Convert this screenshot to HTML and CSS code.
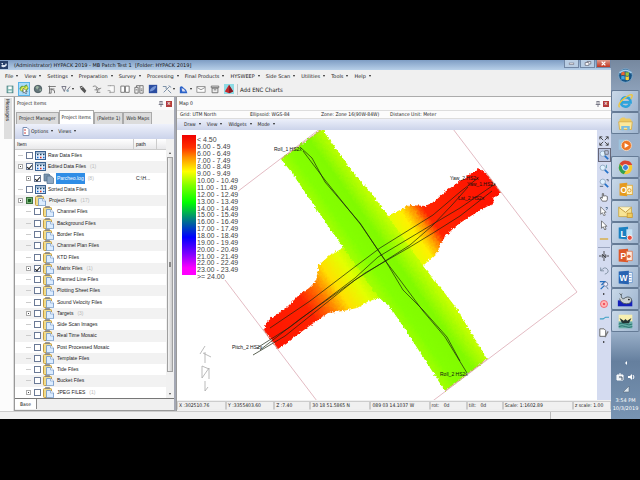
FILE: index.html
```
<!DOCTYPE html>
<html lang="en">
<head>
<meta charset="utf-8">
<title>HYPACK 2019 - MB Patch Test 1</title>
<link rel="stylesheet" href="styles.css">
</head>
<body>
<svg class="defs" aria-hidden="true">
  <defs>
    <linearGradient id="gArm" gradientUnits="userSpaceOnUse" x1="270" y1="340" x2="496" y2="186">
      <stop offset="0" stop-color="#ff1400"/><stop offset=".18" stop-color="#ff2200"/><stop offset=".25" stop-color="#ff7a00"/><stop offset=".31" stop-color="#ffe000"/><stop offset=".38" stop-color="#e4ff00"/><stop offset=".45" stop-color="#a0ff00"/><stop offset=".53" stop-color="#a0ff00"/><stop offset=".6" stop-color="#e0ff00"/><stop offset=".66" stop-color="#fff000"/><stop offset=".7" stop-color="#ff9800"/><stop offset=".735" stop-color="#ff2400"/><stop offset="1" stop-color="#ff1000"/>
    </linearGradient>
    <linearGradient id="gSwath" gradientUnits="userSpaceOnUse" x1="356" y1="277" x2="408" y2="240">
      <stop offset="0" stop-color="#b4ff00"/><stop offset=".3" stop-color="#84ff00"/><stop offset=".65" stop-color="#80fa00"/><stop offset="1" stop-color="#d0ff00"/>
    </linearGradient>
    <filter id="rough" x="-5%" y="-5%" width="110%" height="110%" color-interpolation-filters="sRGB">
      <feTurbulence type="fractalNoise" baseFrequency=".4" numOctaves="2" seed="4" result="n"/>
      <feDisplacementMap in="SourceGraphic" in2="n" scale="4" xChannelSelector="R" yChannelSelector="G"/>
    </filter>
    <symbol id="table" viewBox="0 0 11 9"><rect x=".5" y=".5" width="10" height="8" fill="#e6efff" stroke="#3b6290"/><path d="M1 2h9" stroke="#68a"/><path d="M2 3.5h1.5M5 3.5h1.5M8 3.5h1.5" stroke="#146" stroke-width="1.4"/><path d="M2 6.5h1.5M8 6.5h1.5" stroke="#126bd0" stroke-width="1.5"/><path d="M5 6.5h1.5" stroke="#c32" stroke-width="1.5"/></symbol>
    <symbol id="clip" viewBox="0 0 11 11"><rect x=".5" y="1.5" width="8" height="9" rx="1" fill="#f2dc8c" stroke="#c79d3c"/><path d="M2.5 1.5h4V.5h-4z" fill="#ccc" stroke="#777" stroke-width=".7"/><path d="M3.5 3.5h4l3 2.5v4.7h-7z" fill="#dcecff" stroke="#6b93c6" stroke-width=".8"/><path d="M7.5 3.5V6h3" fill="#fff" stroke="#6b93c6" stroke-width=".6"/></symbol>
    <symbol id="docs" viewBox="0 0 11 11"><path d="M1 1h5l1 1v6H1z" fill="#7892ad" stroke="#4f6d8b" stroke-width=".7"/><path d="M4 3h4l2.500 2v5.500H4z" fill="#90a9c3" stroke="#4f6d8b" stroke-width=".7"/></symbol>
    <symbol id="pin" viewBox="0 0 6 6"><path d="M1.500 .5h3M2 .5v3M4 .5v3M.7 3.500h4.600M3 3.500v2.500" fill="none" stroke="#556" stroke-width=".7"/></symbol>
    <symbol id="mag" viewBox="0 0 12 12"><circle cx="4.500" cy="4.500" r="3.200" fill="#dff1ff" stroke="#8ba3bd"/><path d="M7 7l4 4" stroke="#2672c8" stroke-width="2.200"/></symbol>
  </defs>
</svg>
<div class="screen">
<main class="app">
  <header class="titlebar">
    <svg class="appicon" viewBox="0 0 8 8"><rect width="8" height="8" fill="#26406a"/><path d="M1 5q3 3 6-1l-1-2-1 2-3 0zM1 2h2v2" fill="#dce6f2"/></svg>
    <h1>(Administrator) HYPACK 2019 - MB Patch Test 1 &nbsp;[Folder: HYPACK 2019]</h1>
    <div class="winbtns">
      <button aria-label="Minimize"><svg viewBox="0 0 14 6"><rect x="4.500" y="2.500" width="5" height="1.500" fill="#fff" stroke="#667"  stroke-width=".6"/></svg></button>
      <button aria-label="Restore"><svg viewBox="0 0 14 6"><path d="M6.500 2V.8h4v2.700H9M4.500 2h4v3h-4z" fill="#fff" stroke="#556" stroke-width=".7"/></svg></button>
      <button class="close" aria-label="Close"><svg viewBox="0 0 14 6"><path d="M5 1l4 4M9 1L5 5" stroke="#fff" stroke-width="1.400"/></svg></button>
    </div>
  </header>
  <nav class="menubar">
    <button class="drop">File</button><button class="drop">View</button><button class="drop">Settings</button><button class="drop">Preparation</button><button class="drop">Survey</button><button class="drop">Processing</button><button class="drop">Final Products</button><button class="drop">HYSWEEP</button><button class="drop">Side Scan</button><button class="drop">Utilities</button><button class="drop">Tools</button><button class="drop">Help</button>
  </nav>
  <div class="toolbar">
    <button aria-label="Save"><svg viewBox="0 0 12 12"><rect x="2.500" y="2.500" width="7" height="8" fill="#8fc4bc" stroke="#467f80"/><rect x="4" y="3" width="4" height="3" fill="#fff"/><rect x="4" y="8" width="4" height="2" fill="#e8f4f4"/></svg></button>
    <button class="on" aria-label="Map refresh"><svg viewBox="0 0 12 12"><path d="M1 5q2-4 5-2l3-2 2 4-2 3-4 1-3-1z" fill="#9acb3c" stroke="#3a7a38" stroke-width=".7"/><path d="M2 8l3-4 2 3 3-4" stroke="#f5ee60" stroke-width="1.500" fill="none"/><path d="M5 5v6l1.500-1.500L8 12l1-.6L7.800 9H10z" fill="#fff" stroke="#234" stroke-width=".6"/></svg></button>
    <button aria-label="Globe"><svg viewBox="0 0 12 12"><circle cx="6" cy="6" r="4.500" fill="#63757a" stroke="#46565c"/><path d="M3 4q3-3 4 0l-2 3zM7 7l3-1-1 3z" fill="#9cb5a2"/></svg></button>
    <button aria-label="Level"><svg viewBox="0 0 12 12"><path d="M3 2v9M1.500 3h9M3 6h6M5 11V6l4 2v3M2 11h3" fill="none" stroke="#666"/></svg></button>
    <button class="wide drop" aria-label="Shapes"><svg viewBox="0 0 12 12"><path d="M1 3h5l-2 6zM7 8l4-5" fill="none" stroke="#667"/><circle cx="8" cy="8" r="1.500" fill="#8ab"/></svg></button>
    <button aria-label="Pen"><svg viewBox="0 0 12 12"><path d="M2 3l3-1 5 6-2 3-5-5z" fill="#555"/><path d="M3 5l3-2" stroke="#ddd"/></svg></button>
    <button aria-label="Lines"><svg viewBox="0 0 12 12"><path d="M1 3q3-2 5 1t5 1M3 7h6M5 10h5M5 4l2 6" fill="none" stroke="#777"/></svg></button>
    <button aria-label="Sheet"><svg viewBox="0 0 12 12"><path d="M2 2h4M5 2l5 0v8H4M2 8h3v3" fill="#fafafa" stroke="#999"/></svg></button>
    <button aria-label="Book"><svg viewBox="0 0 12 12"><path d="M1 2.500h4.500V10H1zM6.500 2.500H11V10H6.500z" fill="#fff" stroke="#666"/></svg></button>
    <button aria-label="Table"><svg viewBox="0 0 12 12"><path d="M1 4h4v7H1zM7 2h4v9H7zM3 4V2h4M2 7h2M8 6h2M8 8h2" fill="none" stroke="#666"/></svg></button>
    <button aria-label="Matrix"><svg viewBox="0 0 12 12"><rect x="1" y="1" width="10" height="10" fill="#2b4da0"/><path d="M2 9q1-6 8-7-1 6-8 7z" fill="#7595d6"/></svg></button>
    <button class="wide drop" aria-label="Tools"><svg viewBox="0 0 12 12"><path d="M2 10l7-7M1 3h4v3M8 2l3 2M7 7l4 4" fill="none" stroke="#68809a"/></svg></button>
    <button class="wide drop" aria-label="Whale"><svg viewBox="0 0 12 12"><path d="M1 4q2-3 5 1 3 1 4 6H1z" fill="#2a62c8"/><path d="M3 5q3 0 5 4H4z" fill="#dde"/></svg></button>
    <button aria-label="Mail"><svg viewBox="0 0 12 12"><path d="M1 3h10v7H1zM1 4l5 3 5-3" fill="#fff" stroke="#888"/></svg></button>
    <button aria-label="Archive"><svg viewBox="0 0 12 12"><path d="M1.500 2.500h9v2h-9zM2.500 5h7v5.500h-7zM4.500 7h3" fill="#eee" stroke="#666"/></svg></button>
    <button aria-label="Chart"><svg viewBox="0 0 12 12"><rect width="12" height="12" fill="#8edbe4"/><path d="M6 1l5 8-5 2-5-2z" fill="#c5262b"/><path d="M6 1v10l5-2z" fill="#861b25"/></svg></button>
    <span class="sep"></span>
    <button class="text">Add ENC Charts</button>
  </div>
  <div class="work">
    <aside class="rail"><button>Messages</button></aside>
    <section class="items">
      <div class="panelhead"><h2>Project Items</h2><svg class="i6"><use href="#pin"/></svg><button class="x" aria-label="Close panel">×</button></div>
      <div class="tabs"><button>Project Manager</button><button class="sel">Project Items</button><button>(Palette 1)</button><button>Web Maps</button></div>
      <div class="optbar"><svg class="opticon" viewBox="0 0 8 9"><path d="M1 .5h4l2 2v6H1z" fill="#fff" stroke="#7a8fb4"/><path d="M2 3h2M2 6h2" stroke="#c44"/></svg><button class="drop">Options</button><button class="drop">Views</button></div>
      <div class="treewrap">
        <table class="tree">
          <thead><tr><th>Item</th><th>path</th></tr></thead>
          <tbody>
            <tr><td><i></i><label><input type="checkbox"><svg class="tb"><use href="#table"/></svg>Raw Data Files</label></td><td></td></tr>
            <tr class="alt"><td><i class="exp minus"></i><label><input type="checkbox" checked><svg class="tb"><use href="#table"/></svg>Edited Data Files</label><small>(1)</small></td><td></td></tr>
            <tr class="sub"><td><i class="exp"></i><label><input type="checkbox" checked><svg class="cl"><use href="#docs"/></svg><b>Parcheo.log</b></label><small>(8)</small></td><td>C:\H...</td></tr>
            <tr><td><i></i><label><input type="checkbox"><svg class="tb"><use href="#table"/></svg>Sorted Data Files</label></td><td></td></tr>
            <tr class="alt"><td><i class="exp minus"></i><label><input type="checkbox" class="part"><svg class="cl"><use href="#clip"/></svg>Project Files</label><small>(17)</small></td><td></td></tr>
            <tr class="sub"><td><i></i><label><input type="checkbox"><svg class="cl"><use href="#clip"/></svg>Channel Files</label></td><td></td></tr>
            <tr class="sub alt"><td><i></i><label><input type="checkbox"><svg class="cl"><use href="#clip"/></svg>Background Files</label></td><td></td></tr>
            <tr class="sub"><td><i></i><label><input type="checkbox"><svg class="cl"><use href="#clip"/></svg>Border Files</label></td><td></td></tr>
            <tr class="sub alt"><td><i></i><label><input type="checkbox"><svg class="cl"><use href="#clip"/></svg>Channel Plan Files</label></td><td></td></tr>
            <tr class="sub"><td><i></i><label><input type="checkbox"><svg class="cl"><use href="#clip"/></svg>KTD Files</label></td><td></td></tr>
            <tr class="sub alt"><td><i class="exp"></i><label><input type="checkbox" checked><svg class="cl"><use href="#clip"/></svg>Matrix Files</label><small>(1)</small></td><td></td></tr>
            <tr class="sub"><td><i></i><label><input type="checkbox"><svg class="cl"><use href="#clip"/></svg>Planned Line Files</label></td><td></td></tr>
            <tr class="sub alt"><td><i></i><label><input type="checkbox"><svg class="cl"><use href="#clip"/></svg>Plotting Sheet Files</label></td><td></td></tr>
            <tr class="sub"><td><i></i><label><input type="checkbox"><svg class="cl"><use href="#clip"/></svg>Sound Velocity Files</label></td><td></td></tr>
            <tr class="sub alt"><td><i class="exp"></i><label><input type="checkbox"><svg class="cl"><use href="#clip"/></svg>Targets</label><small>(3)</small></td><td></td></tr>
            <tr class="sub"><td><i></i><label><input type="checkbox"><svg class="cl"><use href="#clip"/></svg>Side Scan Images</label></td><td></td></tr>
            <tr class="sub alt"><td><i></i><label><input type="checkbox"><svg class="cl"><use href="#clip"/></svg>Real Time Mosaic</label></td><td></td></tr>
            <tr class="sub"><td><i></i><label><input type="checkbox"><svg class="cl"><use href="#clip"/></svg>Post Processed Mosaic</label></td><td></td></tr>
            <tr class="sub alt"><td><i></i><label><input type="checkbox"><svg class="cl"><use href="#clip"/></svg>Template Files</label></td><td></td></tr>
            <tr class="sub"><td><i></i><label><input type="checkbox"><svg class="cl"><use href="#clip"/></svg>Tide Files</label></td><td></td></tr>
            <tr class="sub alt"><td><i></i><label><input type="checkbox"><svg class="cl"><use href="#clip"/></svg>Bucket Files</label></td><td></td></tr>
            <tr class="sub"><td><i class="exp"></i><label><input type="checkbox"><svg class="cl"><use href="#clip"/></svg>JPEG FILES</label><small>(1)</small></td><td></td></tr>
          </tbody>
        </table>
        <div class="scroll"><span class="up"></span><span class="thumb"></span><span class="down"></span></div>
      </div>
      <div class="base"><button>Base</button></div>
    </section>
    <section class="map">
      <div class="panelhead"><h2>Map 0</h2><svg class="i6"><use href="#pin"/></svg><button class="x" aria-label="Close map">×</button></div>
      <div class="geo"><span>Grid: UTM North</span><span>Ellipsoid: WGS-84</span><span>Zone: Zone 16(90W-84W)</span><span>Distance Unit: Meter</span></div>
      <div class="mapmenu"><button class="drop">Draw</button><button class="drop">View</button><button class="drop">Widgets</button><button class="drop">Mode</button></div>
      <div class="mapbody">
        <div class="canvas">
          <svg class="chart" viewBox="177 130 420 270" preserveAspectRatio="xMinYMin meet">
            <path d="M325 125L187 230L317 401M430 403L577 292L450 125" fill="none" stroke="#dcaab4" stroke-width=".8"/>
            <g filter="url(#rough)">
              <path fill="url(#gArm)" d="M264 330L267 322 275 315 285 309 298 296 309 288 316 281 319 265 330 255 343 248 360 235 387 216 400 210 410 205 425 206 434 202 446 191 460 181 479 168 486 174 490 178 501 193 493 198 494 204 488 206 474 214 460 223 447 234 443 240 437 253 425 264 400 285 378 298 370 301 357 308 343 311 328 313 308 327 278 349z"/>
              <path fill="url(#gSwath)" d="M281 159L322 129 337 150 355 175 372 194 388 216 423 266 440 287 457 309 473 336 487 359 445 391 423 357 407 332 390 307 378 297 343 247 333 233 317 210 307 195 292 173z"/>
            </g>
            <path d="M281 159L321 130M263 329L278 349M445 391L487 359M486 173L501 193" stroke="#d9907a" stroke-width=".7"/>
            <g fill="none" stroke="#1a2410" stroke-width=".7">
              <path d="M300 147L312 158 325 182 360 223 378 250 385 260 403 290 423 310 447 337 460 361"/>
              <path d="M303 151L325 180 361 225 384 259 400 280 423 311 445 337 467 373"/>
              <path d="M270 328L310 301 352 269 380 248 433 215 460 192 478 178"/>
              <path d="M253 355L285 336 355 280 385 261 410 245 432 226 452 205 468 187"/>
              <path d="M257 348L290 327 355 278 378 257 433 224 460 208 495 184"/>
              <path d="M260 350L300 319 365 273 410 247 433 233 460 216 492 191"/>
            </g>
            <g class="tags">
              <text x="274" y="151">Roll_1 HS2x</text><text x="450" y="180">Yaw_2.HS2x</text><text x="467" y="186">Yaw_1.HS2x</text><text x="458" y="200">Lat_2.HS2x</text><text x="232" y="349">Pitch_2 HS2x</text><text x="440" y="376">Roll_2 HS2x</text>
            </g>
            <path d="M200 354L205 346M203 353L211 357M205 352V363M202 366V378L209 368V379M202 366L209 369M205 381V391L208 387" fill="none" stroke="#aaa" stroke-width=".8"/>
          </svg>
          <div class="legend">
            <div class="ramp"></div>
            <ul><li>&lt; 4.50</li><li>5.00 - 5.49</li><li>6.00 - 6.49</li><li>7.00 - 7.49</li><li>8.00 - 8.49</li><li>9.00 - 9.49</li><li>10.00 - 10.49</li><li>11.00 - 11.49</li><li>12.00 - 12.49</li><li>13.00 - 13.49</li><li>14.00 - 14.49</li><li>15.00 - 15.49</li><li>16.00 - 16.49</li><li>17.00 - 17.49</li><li>18.00 - 18.49</li><li>19.00 - 19.49</li><li>20.00 - 20.49</li><li>21.00 - 21.49</li><li>22.00 - 22.49</li><li>23.00 - 23.49</li><li>&gt;= 24.00</li></ul>
          </div>
        </div>
        <div class="maptools">
          <button aria-label="Zoom extents"><svg viewBox="0 0 12 12"><path d="M1 4V1h3M8 1h3v3M11 8v3H8M4 11H1V8M1 1l4 4M11 1L7 5M11 11L7 7M1 11l4-4" fill="none" stroke="#333"/></svg></button>
          <button class="on" aria-label="Zoom window"><svg viewBox="0 0 12 12"><use href="#mag"/><rect x="7" y="1" width="4" height="4" fill="none" stroke="#444" stroke-width=".7"/></svg></button>
          <button aria-label="Zoom in"><svg viewBox="0 0 12 12"><use href="#mag"/><path d="M9 1v4" stroke="#59a"/></svg></button>
          <button aria-label="Zoom out"><svg viewBox="0 0 12 12"><use href="#mag"/><path d="M1 10h4M9 2h2v2" stroke="#456" fill="none"/></svg></button>
          <button aria-label="Pan"><svg viewBox="0 0 12 12"><path d="M4 11L1.500 7l1-.7L4 7.500V2q.8-1 1.500 0v3q.8-1 1.500 0 .8-1 1.500 0 1-.5 1.500.5V9l-1 2z" fill="#fff" stroke="#333" stroke-width=".8"/></svg></button>
          <button aria-label="Query"><svg viewBox="0 0 12 12"><path d="M2 1v9l2-2 2 4 1.500-1L6 7.500h2.500z" fill="#fff" stroke="#555" stroke-width=".8"/><path d="M8 2q3-1 2 1L9 4.500" fill="none" stroke="#357"/></svg></button>
          <button aria-label="Select"><svg viewBox="0 0 12 12"><path d="M3 1v9l2-2 2 4 1.500-1L7 7.500h2.500z" fill="#fff" stroke="#444" stroke-width=".8"/></svg></button>
          <button aria-label="Measure"><svg viewBox="0 0 12 12"><path d="M1 6h10" stroke="#d8b45c" stroke-width="2"/></svg></button>
          <hr>
          <button aria-label="North up"><svg viewBox="0 0 12 12"><path d="M6 0v12M0 6h3M9 6h3M4 8V4l4 4V4" fill="none" stroke="#222" stroke-width=".9"/></svg></button>
          <button aria-label="Rotate"><svg viewBox="0 0 12 12"><path d="M2 3v4h4M2 7q5-6 8-2t-3 6" fill="none" stroke="#789"/></svg></button>
          <button class="more" aria-label="Find target"><svg viewBox="0 0 12 12"><path d="M1 2h6l-4 4M2 11l4-4" fill="none" stroke="#246fc0" stroke-width="1.500"/><circle cx="8" cy="5" r="2.500" fill="#eef" stroke="#679"/><path d="M9 8l2 3" stroke="#579"/></svg></button>
          <button aria-label="Target"><svg viewBox="0 0 12 12"><circle cx="6" cy="6" r="4.200" fill="#fbb" stroke="#f05560"/><circle cx="6" cy="6" r="1.500" fill="#f05560"/></svg></button>
          <button aria-label="Profile"><svg viewBox="0 0 12 12"><path d="M1 7h4l3-2h4" fill="none" stroke="#3ba0c4" stroke-width="1.300"/></svg></button>
          <button class="more" aria-label="Edit chart"><svg viewBox="0 0 12 12"><path d="M1 1h5l2 2v7H1z" fill="#fff" stroke="#555"/><path d="M11 4L7 11" stroke="#777" stroke-width="1.500"/></svg></button>
        </div>
      </div>
      <div class="coords"><span>X :302510.76</span><span>Y :3355403.60</span><span>Z :7.40</span><span>30 18 51.5865 N</span><span>089 03 14.1037 W</span><span>rot: &nbsp; 0d</span><span>tilt: &nbsp; 0d</span><span>Scale: 1:1602.89</span><span>z scale: 1.00</span></div>
    </section>
  </div>
  <footer class="status"><span></span><span></span></footer>
</main>
<aside class="taskbar">
  <button class="start" aria-label="Start"><svg viewBox="0 0 20 20"><circle cx="10" cy="10" r="8" fill="#175486" stroke="#7cabd0"/><path d="M3 7q7-6 14 0" fill="none" stroke="#a6cce8" stroke-width="2"/><path d="M5 7q2-2 4-1v4q-2-1-4 0z" fill="#ee6432"/><path d="M10 6q2 1 4 0v4q-2 1-4 0z" fill="#9bc43c"/><path d="M5 11q2-1 4 0v4q-2-1-4 0z" fill="#3fa7e4"/><path d="M10 11q2 1 4 0v4q-2 1-4 0z" fill="#fbd13c"/></svg></button>
  <button class="run" aria-label="Internet Explorer"><svg viewBox="0 0 20 20"><path d="M15 13q-2 4-6 3-5-1-4-6t6-5q5 1 5 6H6" fill="none" stroke="#2da3dc" stroke-width="3"/><path d="M3 17Q0 13 9 6q8-6 9-3 0 2-2 4" fill="none" stroke="#efc63c" stroke-width="1.600"/></svg></button>
  <button class="run" aria-label="Explorer"><svg viewBox="0 0 20 20"><path d="M3 5l3-2h3l1 1h5l2 2v11H3z" fill="#edca62"/><path d="M2 8h16l-1 9H3z" fill="#fbe89c" stroke="#d5ab48"/><path d="M5 18v-5h10v5h-3v-3H8v3z" fill="#79bde2"/></svg></button>
  <button aria-label="Media Player"><svg viewBox="0 0 20 20"><rect x="2" y="3" width="11" height="12" fill="#9cc3de"/><circle cx="11" cy="10" r="6" fill="#ee7626" stroke="#f8d9bc"/><path d="M9 7l5 3-5 3z" fill="#fff"/></svg></button>
  <button class="run" aria-label="Chrome"><svg viewBox="0 0 20 20"><circle cx="10" cy="10" r="8" fill="#f6ca37"/><path d="M10 10L3 6q3-5 8-4 5 0 7 5h-8z" fill="#dc4534"/><path d="M3 6l5 6 3 1-3 5Q0 15 3 6z" fill="#30a150"/><circle cx="10" cy="10" r="3.500" fill="#3c82dc" stroke="#fff"/></svg></button>
  <button class="run" aria-label="Outlook"><svg viewBox="0 0 20 20"><path d="M3 3l9-1v16l-9-1z" fill="#e69a1d"/><rect x="11" y="5" width="7" height="11" fill="#fff3c7" stroke="#e2a831"/><text class="logo" x="4" y="14">O</text><circle cx="14.500" cy="11" r="2" fill="none" stroke="#dc9420"/></svg></button>
  <button class="run" aria-label="Mail"><svg viewBox="0 0 20 20"><path d="M2 5h15v11H2z" fill="#f8e494" stroke="#caa645"/><path d="M2 5l8 6 7-6" fill="#fff5c4" stroke="#b98f35"/><rect x="12" y="12" width="6" height="5" fill="#f1cc5a" stroke="#c99a39"/></svg></button>
  <button class="run" aria-label="Lync"><svg viewBox="0 0 20 20"><path d="M2 3l11-1v15L2 16z" fill="#1b81c2"/><path d="M11 5h7v8h-7z" fill="#c4e1f3"/><text class="logo" x="4" y="14">L</text><circle cx="15" cy="15" r="3" fill="#e64d3e" stroke="#fff"/></svg></button>
  <button class="run" aria-label="PowerPoint"><svg viewBox="0 0 20 20"><path d="M2 3l11-1v16L2 17z" fill="#dd5728"/><path d="M11 5h7v11h-7z" fill="#ffeade" stroke="#dd7850"/><text class="logo" x="4" y="14">P</text><circle cx="14" cy="11" r="2" fill="#e0663a"/></svg></button>
  <button class="run" aria-label="Word"><svg viewBox="0 0 20 20"><path d="M2 3l12-1v16L2 17z" fill="#2763b2"/><path d="M14 4h4v12h-4M14 7h3M14 10h3M14 13h3" fill="#fff" stroke="#6594cd"/><text class="logo" x="3" y="14">W</text></svg></button>
  <button class="run" aria-label="Hypack"><svg viewBox="0 0 20 20"><path d="M1 11h17v7H1z" fill="#1520b8"/><path d="M3 3q2 3 3 0M5 4q0 6 3 5 5-4 9 0 1 6-6 6-6 0-8-6" fill="#c9d0d2" stroke="#48545a"/><circle cx="14" cy="10" r="1" fill="#111"/></svg></button>
  <button class="run" aria-label="Hysweep"><svg viewBox="0 0 20 20"><path d="M2 2h16v8H2z" fill="#f8efb0"/><path d="M2 10h16v8H2z" fill="#65ada5"/><path d="M3 6l5 3 2-2 2 2 5-3-3 6H6z" fill="#233"/><path d="M2 13q4-2 8 0t8 0M2 16q4-2 8 0t8 0" fill="none" stroke="#246c68"/></svg></button>
  <div class="tray">
    <span class="left"></span>
    <div class="pair"><svg viewBox="0 0 8 8"><path d="M1 2h6v5H1zM4 0v4" fill="#e9eef3" stroke="#fff"/><path d="M3 4h3v3" stroke="#456" fill="none"/></svg><svg viewBox="0 0 8 8"><path d="M1 3h2l2-2v6L3 5H1z" fill="#fff"/><path d="M6 2q2 2 0 4" fill="none" stroke="#fff"/></svg></div>
    <svg viewBox="0 0 8 8"><path d="M1 7l6-6v6z" fill="#dbe5ee" stroke="#596a7c" stroke-width=".6"/></svg>
    <time>3:54 PM</time><time>10/3/2019</time>
  </div>
</aside>
</div>
</body>
</html>
```
FILE: styles.css
```
* { box-sizing: border-box; }
body, h1, h2, ul, hr { margin: 0; padding: 0; }
body { background: #000; font-family: "DejaVu Sans Condensed", "DejaVu Sans", sans-serif; font-size: 5px; line-height: 7px; color: #222; }
button { border: 0; padding: 0; margin: 0; background: none; font: inherit; color: inherit; white-space: nowrap; }
svg { display: block; flex: none; }
h1, h2 { font-size: inherit; font-weight: normal; }
.defs { position: absolute; width: 0; height: 0; }

.screen { display: flex; min-height: 100vh; padding: 60px 0 61px; }
.app { flex: 1; min-width: 0; display: flex; flex-direction: column; background: #f0f0f0; }

.titlebar { display: flex; align-items: center; gap: 6px; height: 10px; background: linear-gradient(#7e9dc4, #b7cfe8); }
.titlebar, .menubar, .taskbar { font-family: "DejaVu Sans", sans-serif; }
.titlebar h1 { flex: 1; color: #111; }
.appicon { width: 8px; height: 8px; }
.winbtns { display: flex; align-self: flex-start; gap: 1px; }
.winbtns button { width: 15px; height: 8px; border: 1px solid #7187a5; border-top: 0; background: #b9cde3; }
.winbtns svg { width: 100%; height: 100%; }
.winbtns .close { background: linear-gradient(#dc9a8c, #c2341f); }

.drop::after { content: ""; display: inline-block; margin-left: 3px; border: 1px solid transparent; border-top: 2px solid #222; border-bottom: 0; vertical-align: 1px; }
.menubar { display: flex; align-items: center; gap: 6px; height: 12px; padding-left: 5px; }
.toolbar { display: flex; align-items: center; gap: 2px; height: 15px; padding-left: 4px; border-bottom: 1px solid #ababab; }
.toolbar button { display: flex; align-items: center; justify-content: center; width: 12px; height: 14px; }
.toolbar button svg { width: 10px; height: 10px; }
.toolbar .on { background: #aadcf8; border: 1px solid #58b3e8; }
.toolbar .wide { width: 15px; }
.toolbar .wide::after { margin-left: 1px; }
.toolbar .text { width: auto; font-size: 6px; }
.sep { width: 1px; height: 11px; background: #c5c5c5; }

.work { flex: 1; display: flex; min-height: 0; }
.rail { width: 14px; padding: 1px 2px 0 4px; background: #fcfcfc; border-right: 1px solid #ddd; }
.rail button { writing-mode: vertical-rl; width: 8px; height: 41px; padding-top: 1px; text-align: left; line-height: 8px; background: #dedede; }

.items { width: 162px; display: flex; flex-direction: column; border: 1px solid #999; border-top: 0; border-right: 2px solid #a4a8b4; background: #f0f0f0; }
.panelhead { display: flex; align-items: center; gap: 2px; height: 13px; padding: 0 2px; background: #fbfbfb; }
.panelhead h2 { flex: 1; }
.i6 { width: 6px; height: 6px; }
.x { width: 6px; height: 6px; background: #b33c3c; color: #fff; line-height: 5px; font-weight: bold; }
.tabs { display: flex; align-items: flex-end; height: 14px; padding-left: 1px; background: #f4f4f4; }
.tabs button { height: 12px; padding: 0 2px; border: 1px solid #aaa; border-bottom: 0; background: #dcdcdc; }
.tabs .sel { height: 14px; background: #fff; }
.optbar { display: flex; align-items: center; gap: 5px; height: 15px; padding-left: 7px; background: linear-gradient(#eef1fb, #cbd3ea); }
.opticon { width: 8px; height: 9px; margin-right: -4px; }
.treewrap { flex: 1; display: flex; background: #fff; min-height: 0; }
.tree { flex: 1; min-width: 0; display: flex; flex-direction: column; font-family: "Liberation Sans", Arial, sans-serif; line-height: 7px; }
.tree thead { display: block; background: linear-gradient(#fff, #e8e8ea); border-bottom: 1px solid #ccc; }
.tree thead tr { height: 10px; }
.tree tbody { flex: 1; display: flex; flex-direction: column; }
.tree tr { display: flex; width: 100%; }
.tree tbody tr { flex: 1; align-items: center; }
.tree th { font-weight: normal; text-align: left; padding: 2px; width: 23px; border-right: 1px solid #ccc; }
.tree td { padding: 0; width: 30px; white-space: nowrap; }
.tree th:first-child, .tree td:first-child { flex: 1; width: auto; }
.tree td:first-child { display: flex; align-items: center; padding-left: 3px; }
.tree th:nth-child(2) { margin-right: 9px; }
.tree .sub td:first-child { padding-left: 11px; }
.alt { background: #f2f2f2; }
.tree i { width: 5px; height: 5px; margin-right: 3px; flex: none; background: linear-gradient(#ccc, #ccc) 0 2px / 5px 1px no-repeat; }
.tree i.exp { border: 1px solid #aaa; background: linear-gradient(#444, #444) 1px 1px / 1px 1px no-repeat, #fff; }
.tree label { display: flex; align-items: center; gap: 2px; }
.tree input { appearance: none; width: 7px; height: 7px; margin: 0; border: 1px solid #6b7a96; background: #fff; }
.tree input:checked::after { content: ""; display: block; width: 2px; height: 4px; margin-left: 1px; border: solid #222; border-width: 0 1px 1px 0; transform: rotate(40deg); }
.tree input.part { background: #175f1d; border: 1px solid #3e7340; box-shadow: inset 0 0 0 1px #77b177; }
.tree .tb { width: 11px; height: 9px; }
.tree .cl { width: 11px; height: 11px; margin-right: 1px; }
.tree b { font-weight: normal; background: #2f8de6; color: #fff; padding: 2px 1px; margin: 0 -1px; }
.tree small { font-size: inherit; color: #bbb; margin-left: 4px; }
.scroll { width: 8px; display: flex; flex-direction: column; align-items: center; padding: 13px 0 3px; background: #f1f1f1; }
.scroll .up, .scroll .down { border: 1px solid transparent; border-bottom: 2px solid #444; border-top: 0; }
.scroll .down { border-top: 2px solid #444; border-bottom: 0; }
.scroll .thumb { width: 6px; flex: 1; margin: 3px 0 21px; border: 1px solid #a0a0a0; background: linear-gradient(#888, #888) center / 2px 5px no-repeat, linear-gradient(90deg, #f5f5f5, #ccc); }
.base { height: 12px; padding-bottom: 1px; border-top: 1px solid #777; background: #f0f0f0; }
.base button { width: 22px; height: 10px; background: #fff; border-right: 1px solid #888; }

.map { flex: 1; min-width: 0; display: flex; flex-direction: column; background: #fff; border-left: 1px solid #999; }
.geo { display: grid; grid-template-columns: 70fr 71fr 69fr 221fr; height: 9px; align-items: center; padding-left: 3px; border-top: 1px solid #ddd; border-bottom: 1px solid #ddd; background: #fcfcfc; white-space: nowrap; }
.mapmenu { display: flex; align-items: center; gap: 6px; height: 11px; padding-left: 7px; background: linear-gradient(#eceffa, #ccd4ea); }
.mapbody { flex: 1; display: flex; min-height: 0; }
.canvas { flex: 1; min-width: 0; position: relative; background: #fff; }
.chart { width: 100%; }
.tags { font-family: "Liberation Sans", Arial, sans-serif; font-size: 5px; fill: #111; }
.legend { position: absolute; left: 5px; top: 5px; display: flex; gap: 1px; background: #fff; }
.ramp { width: 14px; height: 140px; background: linear-gradient(#f00000, #ff3000 9%, #ff9000 16%, #ffff00 26%, #80ff00 36%, #00ff00 48%, #008080 60%, #0000ff 73%, #8000ff 85%, #ff00ff 95%); }
.legend ul { list-style: none; display: flex; flex-direction: column; height: 145px; padding-top: 1px; font: 7px/7px "Liberation Sans", Arial, sans-serif; color: #444; }
.legend li { flex: 1; min-height: 0; white-space: nowrap; }
.maptools { width: 14px; padding-top: 4px; display: flex; flex-direction: column; align-items: center; background: #d4dbf0; }
.maptools button { width: 13px; height: 14px; display: flex; flex-direction: column; align-items: center; justify-content: center; }
.maptools svg { width: 10px; height: 10px; }
.maptools .on { border: 1px solid #667; background: #bcc7e2; }
.maptools .more { height: 20px; }
.maptools .more::after { content: ""; border: 1px solid transparent; border-left: 2px solid #222; border-right: 0; margin-top: 3px; }
.maptools hr { width: 12px; border: 0; border-top: 1px solid #9ba5bf; margin: 1px 0; }
.coords { display: grid; grid-template-columns: 49fr 48fr 36fr 60fr 59fr 37fr 36fr 70fr 38fr; height: 11px; padding: 1px 0; background: #f0f0f0; white-space: nowrap; }
.coords span { min-width: 0; padding-left: 1px; border: 1px solid #ccc; border-bottom-color: #eee; line-height: 7px; }

.status { display: flex; height: 8px; border-top: 1px solid #ccc; background: #f0f0f0; }
.status span { flex: 551; border-right: 1px solid #bbb; }
.status span + span { flex: 60; border: 0; }

.taskbar { width: 29px; display: flex; flex-direction: column; background: linear-gradient(#76889f, #9bb0ca 14%, #a4b9d1 74%, #657f9e 84%, #7894b2); }
.taskbar button { height: 22px; display: flex; align-items: center; justify-content: center; border-radius: 2px; }
.taskbar button svg { width: 17px; height: 17px; }
.taskbar .start { height: 30px; }
.taskbar .run { border: 1px solid #657b96; border-right: 2px solid #7f92ab; background: linear-gradient(120deg, #c8d8e8, #a0b6d0); }
.logo { font: bold 10px "Liberation Sans", sans-serif; fill: #fff; }
.tray { flex: 1; display: flex; flex-direction: column; align-items: center; justify-content: flex-end; gap: 1px; padding-bottom: 7px; color: #fff; }
.tray svg { width: 8px; height: 8px; margin-bottom: 3px; }
.tray .left { margin-bottom: 7px; border: 2px solid transparent; border-right-color: #fff; border-left: 0; }
.pair { display: flex; gap: 3px; }
```
